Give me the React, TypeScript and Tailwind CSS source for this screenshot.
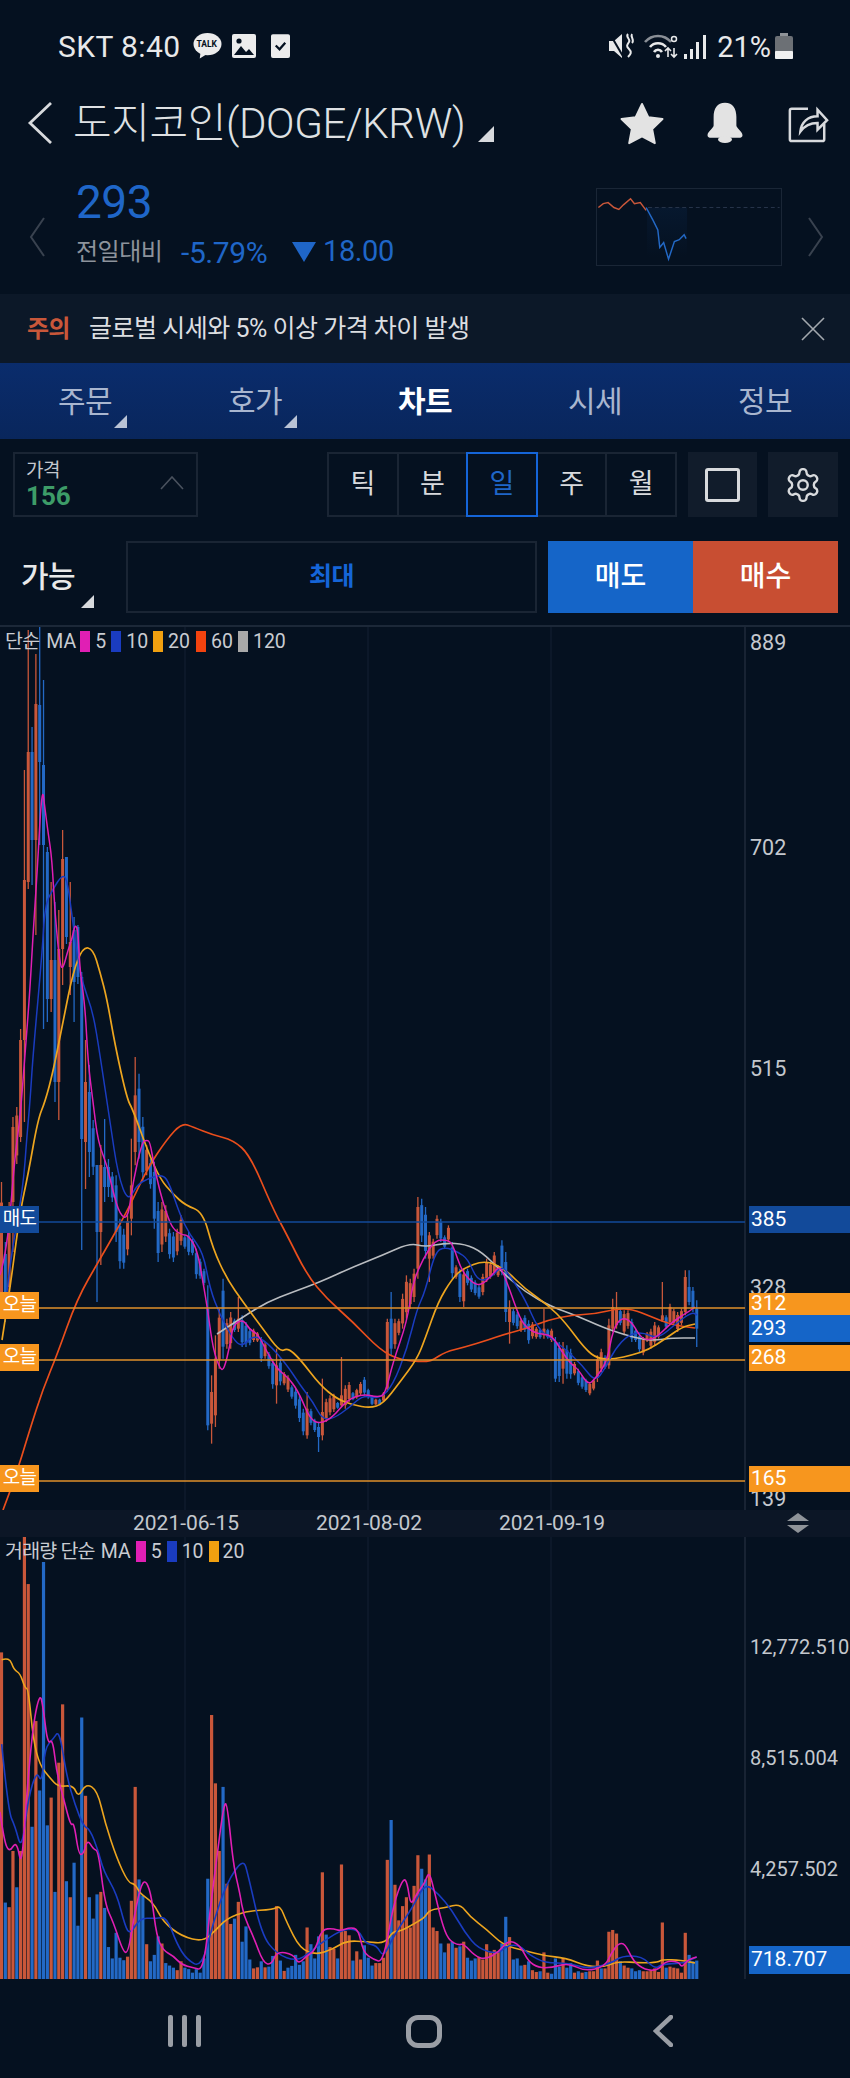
import React from 'react';

type C = [number, number, number, number?, number?];
const A: C[] = [
[0,1180,1317],[1,1240,1320],[0,1200,1300],[0,1115,1250,1125,1200],[0,1105,1162],[0,1027,1140,1038,1135],[0,768,1120,878,1038],[0,628,887,750,880],[1,725,883,750,838],[0,652,933,702,838],[1,625,843,703,760],[1,678,1027,763,843],[1,845,1020,850,997],[0,880,1010,958,997],[1,900,1100,958,1080],[0,908,1118,947,1080],[0,828,983,857,947],[1,855,942,855,935],[0,880,993,940,965],[1,915,1020,928,980],[1,923,982,925,975],[1,970,1248,975,1137],[0,1038,1187,1080,1140],[1,1063,1175,1090,1150],[1,1118,1173],[1,1163,1300,1163,1230],[0,1143,1263,1163,1230],[1,1117,1200,1165,1185],[1,1157,1195,1165,1185],
];
const B: C[] = [
[1,210,300],[1,220,420],[1,350,500],[1,380,500],[0,340,460],[0,110,400,250,350],[0,-135,190,-20,150],[1,-85,170,-40,120],[1,45,240],[0,130,220],[1,170,260],[1,180,380],[1,300,480],[0,300,450],[0,310,420],[1,380,470],[1,390,480],[0,380,460],[0,340,430],[1,400,440],[1,390,460],[1,410,460],[1,440,530],[1,470,530],[1,500,550],[1,550,985,620,970],[0,820,1025,870,965],[0,700,975,770,940],[0,620,800],[1,530,770],[0,650,740],[0,630,740],[1,650,690],[0,585,690,650,680],[1,640,735],[1,660,735],[1,680,730],[0,680,720],[0,690,720],[1,705,780],[0,720,770],[1,750,800],[1,770,860],[0,740,905,790,850],[1,770,850],[0,810,850],[0,820,870],[1,850,890],[1,860,920],[1,880,960],[1,920,1000],[0,870,1010,920,1000],[1,920,970],[1,950,990],[1,960,1050,975,1005],[0,830,1015,930,1000],[0,890,960],[0,880,940],[0,875,930],[1,900,920],[0,765,915,880,910],[0,850,920],[0,840,900],[1,870,895],[0,860,890],[0,840,880],[1,825,880],[1,860,890],[1,880,910],[0,890,910],[1,890,910],[0,870,900],[0,650,870,660,860],[1,570,760,650,740],[0,650,740],[0,650,700],[0,575,680],[0,520,650],[0,530,620],[0,500,600],[0,285,530,315,500],[1,290,420],
];
const D: C[] = [
[1,165,320],[0,240,390,250,320],[0,260,320],[0,190,260],[1,200,270],[1,250,290],[0,220,270],[1,270,380],[0,340,380],[1,350,450],[0,350,465],[1,350,400],[1,370,420],[1,385,430],[1,400,440],[0,365,430],[0,320,390],[0,330,380],[0,300,370],[0,340,375],[1,265,370],[1,300,510,330,480],[0,445,575,470,510],[1,470,520],[1,480,530],[0,500,540],[1,490,540],[1,505,575],[0,510,560],[0,525,560],[1,530,560],[0,470,560,530,550],[1,530,560],[0,530,570],[1,555,690,570,680],[1,570,690],[0,570,695,590,650],[1,580,680],[1,590,680],[0,630,670],[1,650,700],[1,670,710],[1,680,720],[0,690,730],[0,680,715],[0,610,690],[0,590,660],[1,610,650],[0,500,650,520,640],[0,440,540,465,530],[0,420,530,470,520],[1,470,520],[0,475,550],[0,475,530],[1,500,570],[1,530,570],[1,545,600],[0,555,610],[0,540,570],[0,530,590],[0,510,580],[0,520,560],[0,390,510,490,505],[1,490,530],[0,455,520],[0,470,520],[0,480,540],[0,470,520],[0,355,490,375,480],[1,355,460,405,450],[1,405,480],[1,445,585,470,530],
];
const conv = (l: C[], o: number): C[] => l.map(([c, a, b, t, u]) => [c, o + a / 3, o + b / 3, t === undefined ? undefined : o + t / 3, u === undefined ? undefined : o + (u as number) / 3]);
const candles: C[] = [...A, ...conv(B, 1100), ...conv(D, 1150)];
const X = (i: number) => 1.5 + 3.82 * i;

const vol: [number, number][] = ([
[0,372],[1,1075],[0,1088],[0,930],[1,1032],[0,930],[0,47],[0,180],[1,862],[0,565],[1,760],[1,118],[1,858],[0,780],[1,1045],[0,682],[0,518],[1,1015],[0,1060],[1,963],[1,1140],[1,555],[0,775],[1,1060],[1,1120],[1,1052],[0,1045],[1,1090],[1,1200],[1,1232],[1,1160],[1,1230],[1,1237],[0,1227],[0,1070],[0,750],[1,1010],[1,1055],[0,1192],[1,1240],[1,1222],[1,1170],[0,1190],[1,1245],[1,1252],[1,1258],[0,1265],[0,1240],[1,1258],[1,1262],[1,1272],[1,1262],[1,1272],[1,1232],[1,1008],[0,548],[0,740],[0,930],[1,750],[0,1022],[0,1135],[1,1120],[0,1073],[1,1185],[1,1142],[1,1235],[0,1260],[0,1257],[1,1240],[0,1257],[1,1255],[1,1225],[0,1085],[1,1238],[0,1267],[1,1258],[1,1253],[1,1222],[1,1250],[1,1240],[0,1145],[1,1192],[1,1232],[1,1170],[0,990],[1,1165],[0,1200],[0,1205],[1,1232],[0,968],[0,1155],[0,1167],[1,1238],[0,1212],[0,1235],[1,1195],[1,1230],[1,1252],[0,1245],[0,1245],[0,1230],[0,955],[1,843],[0,1025],[0,1125],[0,1085],[0,1060],[0,1145],[0,1028],[0,942],[1,980],[1,1010],[0,940],[0,1145],[0,1155],[1,1190],[1,1215],[0,1190],[1,1185],[0,1202],[1,1198],[0,1185],[1,1230],[1,1238],[1,1232],[0,1228],[0,1235],[0,1192],[0,1215],[0,1208],[0,1212],[1,1190],[1,1115],[0,1172],[1,1235],[1,1232],[1,1252],[0,1250],[1,1240],[0,1265],[0,1270],[1,1268],[0,1215],[0,1272],[1,1275],[1,1232],[1,1255],[0,1232],[1,1258],[1,1245],[0,1272],[1,1268],[0,1272],[1,1270],[0,1268],[0,1268],[0,1238],[1,1260],[0,1260],[0,1157],[0,1152],[0,1162],[1,1240],[0,1252],[0,1258],[1,1260],[1,1268],[1,1265],[0,1268],[0,1268],[0,1265],[0,1260],[0,1270],[0,1131],[1,1258],[0,1255],[0,1258],[0,1260],[0,1272],[0,1160],[1,1222],[1,1240],[1,1238],
] as [number, number][]);

type P = [number, number];
const ma5: P[] = [[0,1273],[7,1250],[15,1153],[20,1117],[25,1053],[30,987],[33,933],[37,873],[42,783],[45,807],[48,830],[52,857],[55,913],[60,963],[63,967],[68,948],[72,937],[75,922],[78,928],[80,970],[85,1003],[88,1060],[93,1100],[98,1140],[107,1163],[113,1190],[120,1213],[128,1217],[133,1180],[142,1140],[147,1138],[150,1140],[154,1163],[160,1190],[167,1213],[173,1227],[182,1233],[188,1233],[197,1247],[203,1280],[208,1310],[213,1347],[220,1367],[224,1368],[230,1343],[233,1323],[243,1317],[250,1328],[258,1332],[267,1350],[277,1367],[290,1377],[300,1393],[310,1417],[320,1422],[333,1415],[347,1398],[363,1392],[377,1395],[385,1393],[393,1360],[407,1320],[413,1280],[423,1257],[435,1238],[448,1238],[453,1243],[462,1270],[475,1283],[483,1282],[492,1273],[500,1263],[508,1283],[520,1317],[528,1327],[538,1332],[552,1333],[562,1350],[572,1363],[578,1367],[588,1383],[595,1377],[607,1360],[613,1327],[622,1315],[632,1320],[642,1338],[655,1337],[672,1320],[688,1310],[695,1305]];
const ma10: P[] = [[7,1290],[10,1260],[23,1187],[27,1133],[30,1100],[33,1053],[42,953],[45,903],[53,887],[62,873],[67,877],[72,913],[77,953],[83,983],[93,1010],[100,1053],[110,1120],[118,1173],[128,1200],[137,1183],[147,1177],[163,1172],[170,1183],[180,1213],[190,1233],[203,1250],[210,1287],[220,1313],[233,1337],[242,1345],[253,1333],[267,1340],[287,1363],[300,1383],[313,1400],[322,1417],[333,1417],[350,1405],[363,1393],[380,1397],[393,1383],[407,1347],[417,1307],[425,1290],[435,1250],[445,1245],[458,1250],[468,1257],[478,1280],[492,1275],[502,1263],[512,1277],[525,1297],[538,1327],[552,1337],[565,1347],[582,1363],[595,1380],[605,1367],[615,1347],[628,1333],[642,1330],[658,1337],[678,1320],[692,1310],[697,1313]];
const ma20: P[] = [[2,1338],[10,1287],[20,1210],[28,1173],[38,1117],[45,1100],[53,1070],[63,1020],[73,970],[83,945],[93,947],[100,970],[107,997],[115,1043],[127,1097],[133,1108],[147,1147],[160,1177],[173,1192],[185,1203],[203,1210],[213,1247],[227,1277],[243,1300],[263,1327],[280,1350],[288,1346],[300,1357],[320,1383],[337,1397],[353,1403],[370,1406],[383,1402],[400,1380],[417,1357],[425,1337],[438,1300],[452,1277],[462,1267],[485,1258],[505,1267],[525,1287],[548,1303],[565,1320],[585,1347],[598,1357],[615,1357],[632,1353],[648,1348],[665,1337],[682,1325],[695,1322]];
const ma60: P[] = [[3,1508],[13,1483],[30,1427],[43,1387],[57,1353],[77,1297],[100,1257],[127,1210],[147,1167],[167,1137],[182,1121],[193,1125],[213,1133],[233,1138],[250,1153],[273,1207],[287,1233],[307,1273],[327,1297],[353,1320],[380,1348],[400,1358],[425,1360],[433,1358],[445,1350],[465,1345],[488,1338],[505,1332],[525,1327],[548,1318],[572,1313],[595,1312],[615,1307],[632,1307],[652,1315],[672,1323],[695,1326]];
const ma120: P[] = [[217,1332],[243,1315],[267,1300],[293,1290],[320,1280],[353,1265],[383,1253],[410,1241],[425,1245],[445,1241],[465,1242],[482,1250],[502,1270],[525,1290],[552,1305],[575,1313],[602,1325],[622,1332],[645,1338],[658,1338],[672,1336],[695,1336]];

const VY = (y: number) => 1520 + y / 2.81;
const zv = (a: P[], b: P[]): P[] => [...a.map(([x, y]): P => [x / 3, VY(y)]), ...b.map(([x, y]): P => [425 + x / 3, VY(y)])];
const v5 = zv([[0,820],[12,900],[28,935],[50,900],[65,980],[80,770],[100,570],[120,485],[130,530],[143,630],[158,615],[170,710],[190,780],[212,860],[222,850],[236,940],[250,940],[262,897],[280,925],[295,930],[315,1080],[340,1130],[370,1215],[385,1215],[405,1100],[425,1020],[440,1015],[455,1060],[470,1170],[490,1210],[520,1225],[545,1250],[580,1258],[610,1265],[630,1100],[650,950],[672,795],[682,800],[700,970],[720,1050],[730,1110],[760,1170],[790,1245],[815,1250],[830,1212],[880,1220],[895,1248],[920,1225],[945,1210],[965,1150],[1000,1148],[1020,1155],[1050,1145],[1075,1150],[1090,1215],[1120,1235],[1150,1243],[1180,1080],[1210,1005],[1222,1020],[1232,1085],[1250,1050]],[[0,1020],[12,985],[30,1050],[50,1130],[70,1180],[100,1195],[115,1190],[150,1225],[180,1235],[220,1215],[250,1180],[285,1195],[310,1240],[340,1258],[380,1258],[430,1245],[480,1268],[540,1255],[560,1215],[580,1190],[600,1190],[625,1240],[660,1265],[700,1265],[720,1240],[760,1240],[770,1258],[790,1235],[815,1228]]);
const v10 = zv([[5,630],[25,820],[45,860],[65,930],[85,780],[110,705],[125,740],[135,640],[160,615],[178,590],[200,720],[225,800],[250,860],[270,870],[295,930],[310,985],[350,1050],[375,1140],[390,1165],[420,1118],[465,1120],[500,1115],[530,1190],[560,1235],[605,1258],[640,1130],[680,1020],[730,950],[745,1000],[785,1165],[830,1220],[890,1240],[930,1215],[975,1180],[1030,1150],[1075,1150],[1095,1190],[1130,1195],[1150,1230],[1180,1170],[1240,1085]],[[0,1020],[40,1050],[80,1095],[120,1160],[160,1205],[220,1220],[245,1195],[285,1195],[310,1220],[360,1245],[430,1245],[490,1262],[560,1245],[590,1225],[650,1225],[690,1262],[710,1248],[770,1245],[790,1240],[815,1228]]);
const v20 = zv([[5,393],[28,385],[42,422],[60,430],[75,472],[85,475],[100,620],[120,690],[150,725],[175,750],[220,745],[235,780],[258,740],[292,760],[315,850],[350,950],[385,1020],[405,1022],[420,1050],[460,1075],[490,1130],[545,1170],[610,1185],[650,1150],[680,1120],[740,1098],[820,1095],[840,1083],[860,1130],[900,1205],[950,1222],[1000,1205],[1040,1182],[1100,1185],[1155,1190],[1180,1155],[1200,1157],[1260,1125]],[[0,1115],[15,1095],[60,1090],[105,1078],[135,1115],[185,1150],[235,1195],[300,1210],[360,1225],[420,1230],[490,1255],[540,1255],[580,1240],[650,1245],[700,1243],[710,1235],[770,1237],[810,1245]]);

const smooth = (p: P[]) => {
  let d = `M${p[0][0]} ${p[0][1]}`;
  for (let i = 1; i < p.length - 1; i++) {
    const mx = (p[i][0] + p[i + 1][0]) / 2;
    const my = (p[i][1] + p[i + 1][1]) / 2;
    d += `Q${p[i][0]} ${p[i][1]} ${mx} ${my}`;
  }
  const l = p[p.length - 1];
  return d + `L${l[0]} ${l[1]}`;
};

const RED = '#c9573a';
const BLUE = '#2369c6';
const PINK = '#e01fb4';
const NAVY = '#1a3cc0';
const ORANGE = '#eda51f';
const DEEP = '#ea4e1c';
const GRAY = '#b9bcc0';

function Corner({ className }: { className: string }) {
  return <span className={`absolute w-0 h-0 border-l-[13px] border-b-[13px] border-l-transparent ${className}`} />;
}

function PriceChart() {
  return (
    <svg className="absolute inset-0 w-[850px] h-[885px]" viewBox="0 625 850 885">
      {[185, 368, 551].map(x => <line key={x} x1={x} x2={x} y1={625} y2={1510} stroke="#152133" strokeWidth="1" />)}
      <line x1="745" x2="745" y1="625" y2="1510" stroke="#1f2a3a" strokeWidth="1.5" />
      {candles.map(([c, hi, lo, t, u], i) => {
        const h = lo - hi;
        const bt = t ?? hi + h * 0.15;
        const bb = u ?? lo - h * 0.15;
        const col = c ? BLUE : RED;
        return (
          <g key={i}>
            <line x1={X(i)} x2={X(i)} y1={hi} y2={lo} stroke={col} strokeWidth="1.3" />
            <rect x={X(i) - 1.5} y={bt} width="3" height={Math.max(bb - bt, 1)} fill={col} />
          </g>
        );
      })}
      <path d={smooth(ma120)} fill="none" stroke={GRAY} strokeWidth="1.6" />
      <path d={smooth(ma60)} fill="none" stroke={DEEP} strokeWidth="1.7" />
      <path d={smooth(ma20)} fill="none" stroke={ORANGE} strokeWidth="1.7" />
      <path d={smooth(ma10)} fill="none" stroke={NAVY} strokeWidth="1.5" />
      <path d={smooth(ma5)} fill="none" stroke={PINK} strokeWidth="1.5" />
      <line x1="0" x2="745" y1="1220" y2="1220" stroke="#124a9a" strokeWidth="1.5" />
      <line x1="0" x2="745" y1="1306" y2="1306" stroke="#e0912a" strokeWidth="1.5" />
      <line x1="0" x2="745" y1="1358" y2="1358" stroke="#e0912a" strokeWidth="1.5" />
      <line x1="0" x2="745" y1="1479" y2="1479" stroke="#e0912a" strokeWidth="1.5" />
    </svg>
  );
}

function VolumeChart() {
  return (
    <svg className="absolute inset-0 w-[850px] h-[442px]" viewBox="0 1537 850 442">
      {[185, 368, 551].map(x => <line key={x} x1={x} x2={x} y1={1537} y2={1979} stroke="#152133" strokeWidth="1" />)}
      <line x1="745" x2="745" y1="1537" y2="1979" stroke="#1f2a3a" strokeWidth="1.5" />
      {vol.map(([c, y], i) => (
        <rect key={i} x={X(i) - 1.6} y={VY(y)} width="3.2" height={1979 - VY(y)} fill={c ? BLUE : RED} />
      ))}
      <path d={smooth(v20)} fill="none" stroke={ORANGE} strokeWidth="1.6" />
      <path d={smooth(v10)} fill="none" stroke={NAVY} strokeWidth="1.6" />
      <path d={smooth(v5)} fill="none" stroke={PINK} strokeWidth="1.6" />
    </svg>
  );
}

function Swatch({ c }: { c: string }) {
  return <span className={`w-[10px] h-[21px] ${c}`} />;
}

function Tag({ top, bg, children }: { top: string; bg: string; children: React.ReactNode }) {
  return <div className={`absolute left-0 w-[39px] h-[27px] flex items-center justify-center text-white text-[19px] tracking-[-0.8px] ${top} ${bg}`}>{children}</div>;
}

function Val({ pos, bg, children }: { pos: string; bg: string; children: React.ReactNode }) {
  return <div className={`absolute left-[749px] w-[101px] flex items-center pl-[2px] text-white text-[21px] ${pos} ${bg}`}>{children}</div>;
}

function Axis({ top, size = 'text-[21.5px]', children }: { top: string; size?: string; children: React.ReactNode }) {
  return <div className={`absolute left-[750px] leading-none text-[#c4c8ce] ${size} ${top}`}>{children}</div>;
}

const Tab = ({ label, corner, active }: { label: string; corner?: boolean; active?: boolean }) => (
  <div className={`relative w-[170px] h-full flex items-center justify-center text-[30px] tracking-[-0.6px] ${active ? 'text-white font-bold' : 'text-[#a9b6cf]'}`}>
    {label}
    {corner && <Corner className="left-[114px] top-[52px] border-b-[#b9c3d6]" />}
  </div>
);

const seg = ['틱', '분', '일', '주', '월'];

export default function App() {
  return (
    <div className="w-[850px] h-[2078px] overflow-hidden bg-[#051120] text-[#d8dadd] font-['Roboto','Noto_Sans_CJK_KR',sans-serif]">
      {/* status bar */}
      <div className="h-[72px] flex items-start pt-[29px] pl-[58px] pr-[57px] text-[#e8e9ea]">
        <span className="text-[30px] leading-[36px] tracking-[0.4px]">SKT 8:40</span>
        <span className="relative ml-[13px] mt-[3px] w-[29px] h-[28px]">
          <svg viewBox="0 0 30 28" className="w-[29px] h-[28px]"><ellipse cx="15" cy="12" rx="14.5" ry="11.5" fill="#ececec" /><path d="M8 19 L7 27 L15 22Z" fill="#ececec" /></svg>
          <span className="absolute left-[3px] top-[7px] text-[8.5px] leading-[10px] font-bold text-[#051120]">TALK</span>
        </span>
        <svg viewBox="0 0 24 24" className="ml-[10px] mt-[5px] w-[24px] h-[24px]"><rect width="24" height="24" rx="2" fill="#ececec" /><path d="M2 21l7-9 5 6 3-3 5 6z" fill="#051120" /><circle cx="7" cy="7" r="2.6" fill="#051120" /></svg>
        <svg viewBox="0 0 20 25" className="ml-[15px] mt-[5px] w-[19px] h-[24px]"><rect width="20" height="25" rx="2" fill="#ececec" /><path d="M5 12l4 4 6-7" fill="none" stroke="#051120" strokeWidth="2.4" /></svg>
        <svg viewBox="0 0 26 26" className="ml-auto mt-[4px] w-[26px] h-[26px]" fill="#e8e9ea"><path d="M0 8h5l8-7 v24 l-8-7H0z" /><path d="M1 1 L15 25" stroke="#051120" strokeWidth="2" /><path d="M19 1c-3 3 3 5 1 8s-3 4 0 7 2 5-1 8 M23 1c-2 3 3 6 0 9" fill="none" stroke="#e8e9ea" strokeWidth="2" /></svg>
        <svg viewBox="0 0 34 26" className="ml-[9px] mt-[4px] w-[34px] h-[26px]" fill="none"><path d="M1 9C8 1 20 1 27 9" stroke="#8a8f96" strokeWidth="2.6" /><path d="M6 14c4-5 12-5 16 0" stroke="#e8e9ea" strokeWidth="2.6" /><path d="M10 19c2-3 6-3 8 0" stroke="#e8e9ea" strokeWidth="2.6" /><circle cx="14" cy="23" r="2" fill="#e8e9ea" /><path d="M24 24v-9M21 18l3-3 3 3M30 15v9M27 21l3 3 3-3" stroke="#e8e9ea" strokeWidth="1.6" /><circle cx="30" cy="6" r="2.5" stroke="#e8e9ea" strokeWidth="1.5" /></svg>
        <svg viewBox="0 0 23 25" className="ml-[6px] mt-[5px] w-[23px] h-[25px]" fill="#e8e9ea"><rect x="0" y="20" width="3" height="5" /><rect x="6" y="15" width="3" height="10" /><rect x="12" y="8" width="3" height="17" /><rect x="19" y="1" width="3" height="24" /></svg>
        <span className="ml-[10px] text-[29px] leading-[36px]">21%</span>
        <svg viewBox="0 0 18 26" className="ml-[4px] mt-[4px] w-[18px] h-[26px]"><rect x="5" width="8" height="3" fill="#8f9398" /><rect y="3" width="18" height="23" rx="2" fill="#6c7075" /><rect y="18" width="18" height="8" rx="1" fill="#f0f0f0" /></svg>
      </div>

      {/* header */}
      <div className="h-[98px] flex items-start pt-[29px] pl-[27px] pr-[21px]">
        <svg viewBox="0 0 26 42" className="w-[26px] h-[42px] mt-[1px]" fill="none" stroke="#d8dadd" strokeWidth="2.8"><path d="M24 1 L3 21 L24 41" /></svg>
        <span className="ml-[20px] text-[42px] leading-[46px] tracking-[-0.4px] font-light text-[#dfe1e3]">도지코인(DOGE/KRW)</span>
        <span className="ml-[13px] mt-[25px] w-0 h-0 border-l-[16px] border-b-[16px] border-l-transparent border-b-[#d8dadd]" />
        <svg viewBox="0 0 24 24" className="ml-auto w-[46px] h-[46px]" fill="#e3e3e3"><path d="M12 1.5l3.3 6.9 7.4 1-5.4 5.2 1.4 7.4L12 18.5l-6.7 3.5 1.4-7.4L1.3 9.4l7.4-1z" stroke="#e3e3e3" strokeLinejoin="round" /></svg>
        <svg viewBox="0 0 24 24" className="ml-[39px] w-[42px] h-[42px]" fill="#e3e3e3"><path d="M12 1c4.5 0 6.5 3.500 6.500 8v5c0 1.500 3.500 3.500 3.500 5.500 0 1-1 1.500-2 1.500H4c-1 0-2-.5-2-1.500C2 17.500 5.500 15.500 5.500 14V9C5.500 4.500 7.500 1 12 1z" /><ellipse cx="12" cy="22" rx="4" ry="2" /></svg>
        <svg viewBox="0 0 44 44" className="ml-[41px] w-[42px] h-[42px]" fill="none" stroke="#d8dadd" strokeWidth="2.6"><path d="M22 8H5a2 2 0 0 0-2 2v30a2 2 0 0 0 2 2h32a2 2 0 0 0 2-2V24" /><path d="M14 32c1-10 8-16 18-16V9l10 11-10 10v-7c-7 0-13 2-18 9z" /></svg>
      </div>

      {/* price */}
      <div className="relative h-[124px] pl-[76px] pt-[6px]">
        <svg viewBox="0 0 16 40" className="absolute left-[29px] top-[47px] w-[16px] h-[40px]" fill="none" stroke="#39424f" strokeWidth="2"><path d="M15 1L2 20l13 19" /></svg>
        <svg viewBox="0 0 16 40" className="absolute left-[808px] top-[47px] w-[16px] h-[40px]" fill="none" stroke="#39424f" strokeWidth="2"><path d="M1 1l13 19L1 39" /></svg>
        <div className="text-[46px] leading-[52px] text-[#1f66c8] tracking-[-0.5px]">293</div>
        <div className="flex items-center mt-[7px] h-[34px]">
          <span className="text-[24px] text-[#8d939c] w-[105px] tracking-[-0.5px]">전일대비</span>
          <span className="text-[30px] text-[#1f66c8] w-[111px] tracking-[-0.4px]">-5.79%</span>
          <span className="w-0 h-0 border-x-[12px] border-t-[20px] border-x-transparent border-t-[#1f66c8]" />
          <span className="ml-[7px] text-[29px] text-[#1f66c8] tracking-[-0.4px]">18.00</span>
        </div>
        <svg viewBox="0 0 186 78" className="absolute left-[596px] top-[18px] w-[186px] h-[78px] border border-[#1a2636]" fill="none">
          <defs><linearGradient id="g" x1="0" x2="0" y1="0" y2="1"><stop offset="0" stopColor="#0d3468" stopOpacity="0.2" /><stop offset="1" stopColor="#0d3468" stopOpacity="0" /></linearGradient></defs>
          <path d="M50 19 L91 19 L91 70 L50 70Z" fill="url(#g)" />
          <path d="M51 19 H186" stroke="#27344a" strokeWidth="1" strokeDasharray="4 3" />
          <path d="M0 19l5-4 5-1 6 5 5 2 5-5 7-6 4 5 6-1 6 8" stroke="#c9573a" strokeWidth="1.5" />
          <path d="M49 19l7 13 5 10 2 18 4-5 5 17 6-18 5-2 5-5 2 4" stroke="#2369c6" strokeWidth="1.5" />
        </svg>
      </div>

      {/* alert */}
      <div className="h-[69px] bg-[#0c1828] flex items-center pl-[27px] pr-[25px]">
        <span className="text-[#c9573a] text-[24px] font-bold w-[62px] tracking-[-0.8px]">주의</span>
        <span className="text-[#dcdee1] text-[25px] tracking-[-0.5px]">글로벌 시세와 5% 이상 가격 차이 발생</span>
        <svg viewBox="0 0 24 24" className="ml-auto w-[24px] h-[24px]" fill="none" stroke="#a3a8ae" strokeWidth="1.6"><path d="M1 1l22 22M23 1L1 23" /></svg>
      </div>

      {/* tabs */}
      <div className="h-[76px] flex bg-gradient-to-b from-[#0a2c6c] to-[#09265c]">
        <Tab label="주문" corner />
        <Tab label="호가" corner />
        <Tab label="차트" active />
        <Tab label="시세" />
        <Tab label="정보" />
      </div>

      {/* controls */}
      <div className="h-[78px] flex items-start pt-[13px] pl-[13px] pr-[12px]">
        <div className="relative w-[185px] h-[65px] border-2 border-[#1a2534] pl-[11px] pt-[6px]">
          <div className="text-[19px] leading-[22px] text-[#c4c8ce] tracking-[-0.5px]">가격</div>
          <div className="text-[26px] leading-[28px] font-bold text-[#3d9c68]">156</div>
          <svg viewBox="0 0 24 14" className="absolute left-[145px] top-[22px] w-[24px] h-[14px]" fill="none" stroke="#4a525e" strokeWidth="1.6"><path d="M1 13L12 1l11 12" /></svg>
        </div>
        <div className="ml-auto flex w-[350px] h-[65px] border-2 border-[#1a2534]">
          {seg.map(s => (
            <div key={s} className={`flex-1 flex items-center justify-center text-[27px] -my-[2px] ${s === '일' ? 'border-2 border-[#1565d8] text-[#1f66c8]' : 'text-[#d8dadd]'} ${s === '틱' || s === '주' ? 'border-r-2 border-[#1a2534]' : ''}`}>{s}</div>
          ))}
        </div>
        <div className="ml-[11px] w-[69px] h-[65px] bg-[#111c2b] flex items-center justify-center">
          <span className="w-[35px] h-[34px] border-[3px] border-[#d8dadd] rounded-[3px]" />
        </div>
        <div className="ml-[11px] w-[70px] h-[65px] bg-[#111c2b] flex items-center justify-center">
          <svg viewBox="0 0 24 24" className="w-[38px] h-[38px]" fill="none" stroke="#d8dadd" strokeWidth="1.5" strokeLinecap="round" strokeLinejoin="round"><path d="M12.22 2h-.44a2 2 0 0 0-2 2v.18a2 2 0 0 1-1 1.73l-.43.25a2 2 0 0 1-2 0l-.15-.08a2 2 0 0 0-2.73.73l-.22.38a2 2 0 0 0 .73 2.73l.15.1a2 2 0 0 1 1 1.72v.51a2 2 0 0 1-1 1.74l-.15.09a2 2 0 0 0-.73 2.73l.22.38a2 2 0 0 0 2.73.73l.15-.08a2 2 0 0 1 2 0l.43.25a2 2 0 0 1 1 1.73V20a2 2 0 0 0 2 2h.44a2 2 0 0 0 2-2v-.18a2 2 0 0 1 1-1.73l.43-.25a2 2 0 0 1 2 0l.15.08a2 2 0 0 0 2.73-.73l.22-.39a2 2 0 0 0-.73-2.73l-.15-.08a2 2 0 0 1-1-1.74v-.5a2 2 0 0 1 1-1.74l.15-.09a2 2 0 0 0 .73-2.73l-.22-.38a2 2 0 0 0-2.73-.73l-.15.08a2 2 0 0 1-2 0l-.43-.25a2 2 0 0 1-1-1.73V4a2 2 0 0 0-2-2z" /><circle cx="12" cy="12" r="3" /></svg>
        </div>
      </div>

      {/* order row */}
      <div className="relative h-[108px] flex items-start pt-[24px] pl-[21px] pr-[12px]">
        <span className="text-[30px] leading-[72px] text-[#e8e9ea] w-[105px] tracking-[-0.5px] font-medium">가능</span>
        <Corner className="left-[81px] top-[78px] border-b-[#d8dadd]" />
        <div className="w-[411px] h-[72px] border-2 border-[#1a2534] flex items-center justify-center text-[#1565d8] text-[25px] font-bold tracking-[-0.5px]">최대</div>
        <div className="ml-[11px] w-[145px] h-[72px] bg-[#1565c8] flex items-center justify-center text-white text-[28px] font-medium">매도</div>
        <div className="w-[145px] h-[72px] bg-[#c84e32] flex items-center justify-center text-white text-[28px] font-medium">매수</div>
      </div>

      {/* price chart: page y 625-1510 */}
      <div className="relative h-[885px] border-t-2 border-[#1c2838] overflow-hidden">
        <PriceChart />
        <div className="absolute left-[5px] top-[4px] flex items-center h-[21px] text-[19.5px] text-[#c9ccd2]">
          <span className="tracking-[-0.8px]">단순</span>
          <span className="ml-[7px] mr-[4px]">MA</span>
          <Swatch c="bg-[#e01fb4]" /><span className="ml-[5px] mr-[5px]">5</span>
          <Swatch c="bg-[#1a3cc0]" /><span className="ml-[5px] mr-[5px]">10</span>
          <Swatch c="bg-[#f0a010]" /><span className="ml-[5px] mr-[6px]">20</span>
          <Swatch c="bg-[#f2430f]" /><span className="ml-[5px] mr-[5px]">60</span>
          <Swatch c="bg-[#a9a9a9]" /><span className="ml-[5px]">120</span>
        </div>
        <Axis top="top-[5px]">889</Axis>
        <Axis top="top-[210px]">702</Axis>
        <Axis top="top-[431px]">515</Axis>
        <Axis top="top-[650px]">328</Axis>
        <Axis top="top-[861px]">139</Axis>
        <Tag top="top-[579px]" bg="bg-[#124a9a]">매도</Tag>
        <Tag top="top-[665px]" bg="bg-[#f7961e]">오늘</Tag>
        <Tag top="top-[717px]" bg="bg-[#f7961e]">오늘</Tag>
        <Tag top="top-[838px]" bg="bg-[#f7961e]">오늘</Tag>
        <Val pos="top-[579px] h-[27px]" bg="bg-[#124a9a]">385</Val>
        <Val pos="top-[666px] h-[22px]" bg="bg-[#f7961e]">312</Val>
        <Val pos="top-[688px] h-[27px]" bg="bg-[#1565c8]">293</Val>
        <Val pos="top-[718px] h-[26px]" bg="bg-[#f7961e]">268</Val>
        <Val pos="top-[839px] h-[26px]" bg="bg-[#f7961e]">165</Val>
      </div>

      {/* date axis */}
      <div className="relative h-[27px] bg-[#0c1626] text-[21px] text-[#c4c8ce] leading-[27px]">
        <span className="absolute left-[133px]">2021-06-15</span>
        <span className="absolute left-[316px]">2021-08-02</span>
        <span className="absolute left-[499px]">2021-09-19</span>
        <svg viewBox="0 0 22 20" className="absolute left-[787px] top-[3px] w-[22px] h-[20px]" fill="#8f9399"><path d="M11 0l11 8H0z" /><path d="M0 12h22l-11 8z" /></svg>
      </div>

      {/* volume: page y 1537-1979 */}
      <div className="relative h-[442px] overflow-hidden">
        <VolumeChart />
        <div className="absolute left-[5px] top-[4px] flex items-center h-[21px] text-[19.5px] text-[#c9ccd2]">
          <span className="tracking-[-0.8px]">거래량 단순</span>
          <span className="ml-[6px] mr-[5px]">MA</span>
          <Swatch c="bg-[#e01fb4]" /><span className="ml-[5px] mr-[5px]">5</span>
          <Swatch c="bg-[#1a3cc0]" /><span className="ml-[5px] mr-[5px]">10</span>
          <Swatch c="bg-[#f0a010]" /><span className="ml-[4px]">20</span>
        </div>
        <Axis top="top-[100px]" size="text-[20px]">12,772.510</Axis>
        <Axis top="top-[211px]" size="text-[20px]">8,515.004</Axis>
        <Axis top="top-[322px]" size="text-[20px]">4,257.502</Axis>
        <Val pos="top-[409px] h-[28px]" bg="bg-[#1565c8]">718.707</Val>
      </div>

      {/* nav */}
      <div className="h-[99px] flex items-start pt-[36px] pl-[168px]">
        <span className="flex gap-[9px]">
          <span className="w-[5px] h-[32px] bg-[#9a9ea5] rounded-[2px]" />
          <span className="w-[5px] h-[32px] bg-[#9a9ea5] rounded-[2px]" />
          <span className="w-[5px] h-[32px] bg-[#9a9ea5] rounded-[2px]" />
        </span>
        <span className="ml-[205px] w-[36px] h-[33px] border-[5px] border-[#9a9ea5] rounded-[12px]" />
        <svg viewBox="0 0 20 32" className="ml-[211px] w-[20px] h-[32px]" fill="none" stroke="#9a9ea5" strokeWidth="4.5" strokeLinecap="round"><path d="M18 2L3 16l15 14" /></svg>
      </div>
    </div>
  );
}
